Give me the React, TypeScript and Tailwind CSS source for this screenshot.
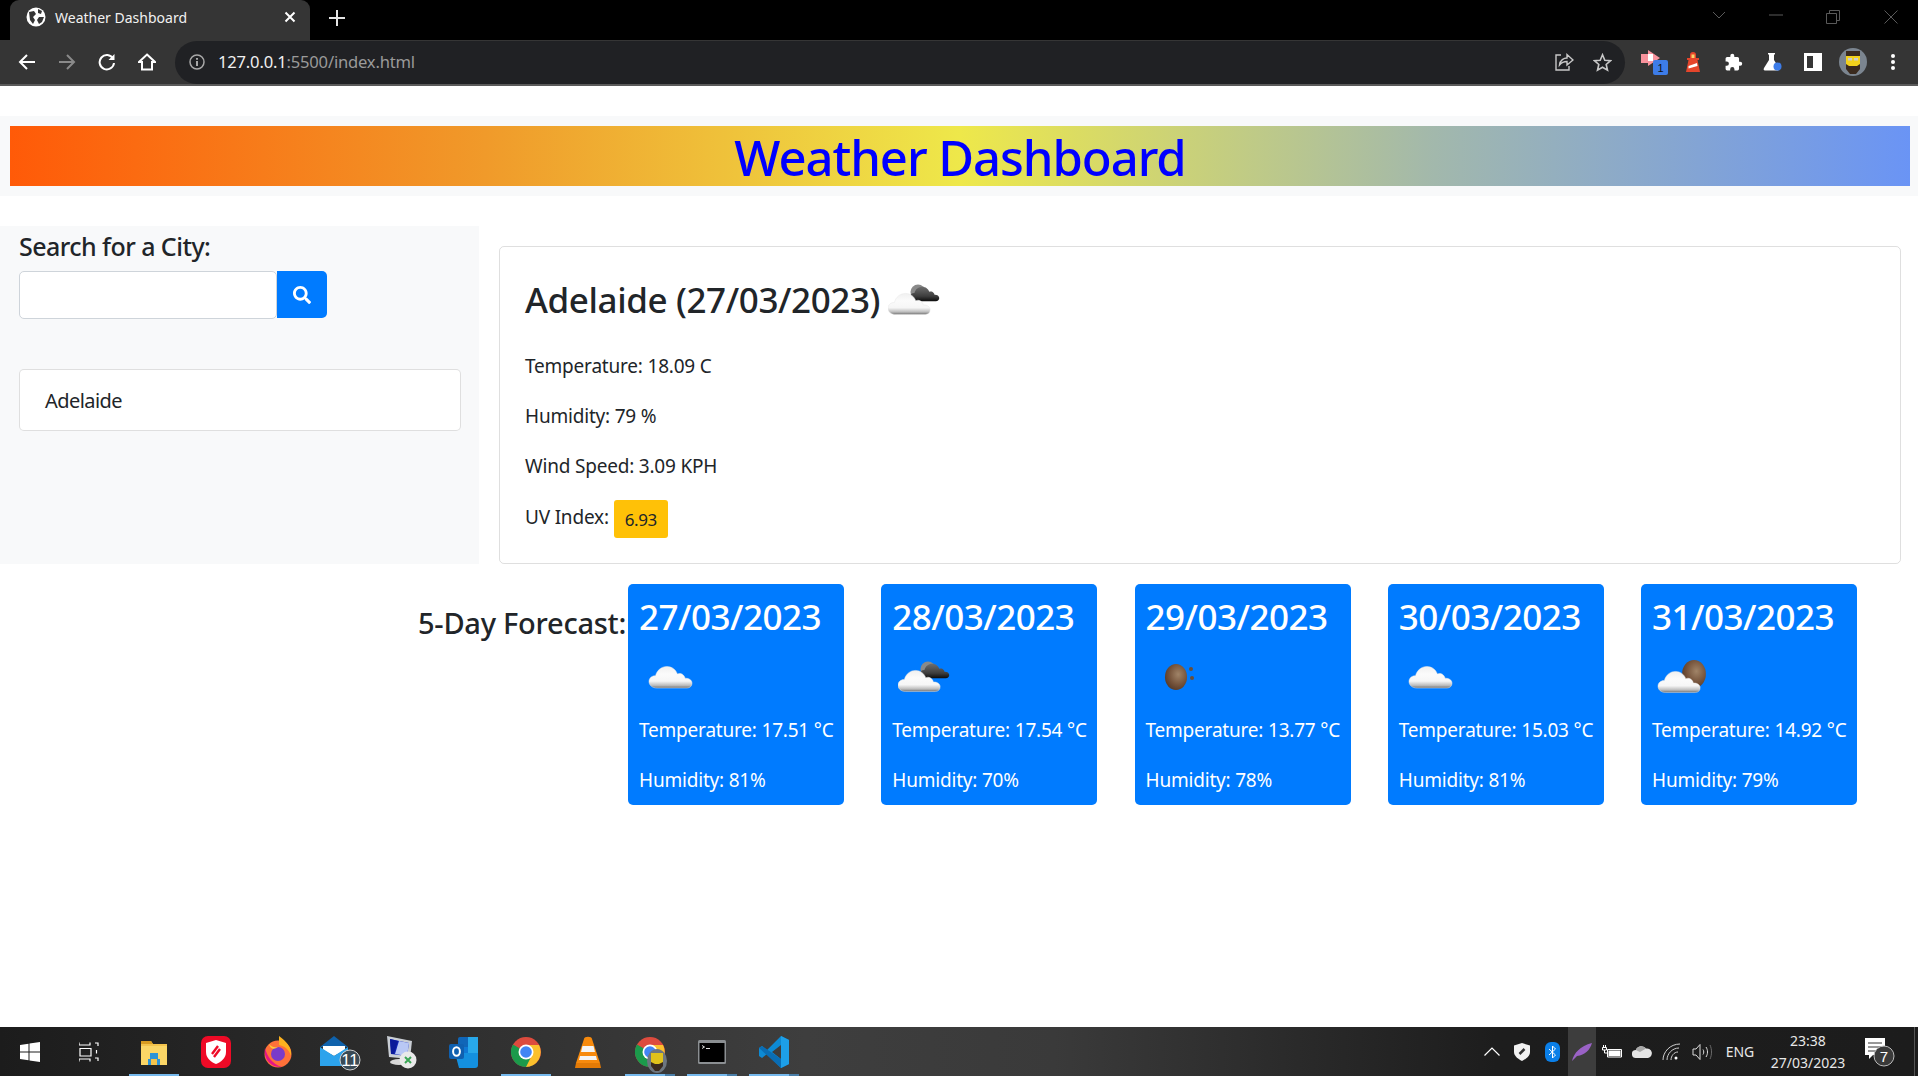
import React from "react";
import { FaSearch } from "react-icons/fa";

const W = ({ children, w, cls = "" }: { children?: React.ReactNode; w: string; cls?: string }) => (
  <div className={`${w} h-full flex items-center justify-center shrink-0 ${cls}`}>{children}</div>
);

function Cloud({ id, x = 0, y = 0, s = 1, dark = false }: { id: string; x?: number; y?: number; s?: number; dark?: boolean }) {
  return (
    <g transform={`translate(${x} ${y}) scale(${s})`}>
      <defs>
        <linearGradient id={id} x1="0" y1="0" x2="0" y2="1">
          {dark ? (
            <>
              <stop offset="0" stopColor="#6e6e6e" />
              <stop offset="0.65" stopColor="#3d3d3d" />
              <stop offset="1" stopColor="#0c0c0c" />
            </>
          ) : (
            <>
              <stop offset="0" stopColor="#f0f0f0" />
              <stop offset="0.35" stopColor="#fbfbfb" />
              <stop offset="0.68" stopColor="#f6f6f6" />
              <stop offset="0.88" stopColor="#bcbcbc" />
              <stop offset="1" stopColor="#707070" />
            </>
          )}
        </linearGradient>
      </defs>
      <path
        d="M8 24 C3 24 0 21 0 17.5 C0 14 3 11.6 6.5 11.8 C8 6 12.5 2.5 18 2.5 C23 2.5 27 5.8 28.3 10 C30 9 33 9.2 34.5 11.3 C35.5 12.5 36 13.5 36 14.3 C39.5 14 43 15.8 43 19.2 C43 22 41 24 38 24 Z"
        fill={`url(#${id})`}
        stroke={dark ? "none" : "#e6e6e6"}
        strokeWidth={dark ? 0 : 0.5}
      />
    </g>
  );
}

function Moon({ id, cx, cy, r = 10 }: { id: string; cx: number; cy: number; r?: number }) {
  return (
    <>
      <defs>
        <radialGradient id={id} cx="0.6" cy="0.4" r="0.75">
          <stop offset="0" stopColor="#a08468" />
          <stop offset="0.55" stopColor="#74523a" />
          <stop offset="1" stopColor="#4a3020" />
        </radialGradient>
      </defs>
      <ellipse cx={cx} cy={cy} rx={r * 0.85} ry={r} fill={`url(#${id})`} />
    </>
  );
}

function BrokenIcon({ id }: { id: string }) {
  return (
    <svg width="52" height="36" viewBox="0 0 52 36">
      <circle cx="30" cy="10" r="7.5" fill="#8a8a8a" />
      <Cloud id={`${id}d`} x={22} y={3} s={0.68} dark />
      <Cloud id={`${id}w`} x={0} y={9} s={0.98} />
    </svg>
  );
}
function CloudIcon({ id }: { id: string }) {
  return (
    <svg width="46" height="26" viewBox="0 0 46 26">
      <Cloud id={id} x={1} y={0} s={1} />
    </svg>
  );
}
function NightIcon({ id }: { id: string }) {
  return (
    <svg width="36" height="30" viewBox="0 0 36 30">
      <Moon id={id} cx={12} cy={15} r={13} />
      <circle cx="27" cy="7" r="2" fill="#6b4e38" />
      <circle cx="28" cy="16" r="2" fill="#6b4e38" />
    </svg>
  );
}
function CloudMoonIcon({ id }: { id: string }) {
  return (
    <svg width="50" height="36" viewBox="0 0 50 36">
      <Moon id={id} cx={37} cy={15} r={14} />
      <Cloud id={`${id}w`} x={1} y={10} s={0.98} />
    </svg>
  );
}

const forecast = [
  { d: "27/03/2023", t: "17.51", h: "81", icon: <CloudIcon id="f1" />, pl: "pl-[9px]" },
  { d: "28/03/2023", t: "17.54", h: "70", icon: <BrokenIcon id="f2" />, pl: "pl-[6px]" },
  { d: "29/03/2023", t: "13.77", h: "78", icon: <NightIcon id="f3" />, pl: "pl-[18px]" },
  { d: "30/03/2023", t: "15.03", h: "81", icon: <CloudIcon id="f4" />, pl: "pl-[9px]" },
  { d: "31/03/2023", t: "14.92", h: "79", icon: <CloudMoonIcon id="f5" />, pl: "pl-[5px]" },
];

const stroke = { fill: "none", stroke: "currentColor", strokeWidth: 2 } as const;

function Browser() {
  return (
    <>
      <div className="h-[40px] bg-black flex shrink-0 text-white">
        <div className="ml-[10px] w-[300px] h-full bg-[#353535] rounded-t-[9px] flex items-center pl-[16px] pr-[10px] pb-[6px]">
          <svg width="20" height="20" viewBox="0 0 20 20" className="shrink-0">
            <circle cx="10" cy="10" r="9.5" fill="#fff" />
            <path d="M3 5 L8 4 L10 7 L7 10 L9 13 L7 17 L4 13 Z M12 2 L16 4 L15 7 L12 6 Z M13 10 L18 10 L16 15 L13 17 L11 13 Z" fill="#353535" />
          </svg>
          <span className="ml-[9px] text-[14px] text-[#f1f1f1] flex-1 whitespace-nowrap">Weather Dashboard</span>
          <svg width="12" height="12" viewBox="0 0 12 12" className="text-white mr-[4px]"><path d="M1.5 1.5 L10.5 10.5 M10.5 1.5 L1.5 10.5" {...stroke} /></svg>
        </div>
        <svg width="16" height="16" viewBox="0 0 16 16" className="ml-[19px] mt-[10px] text-[#e4e4e4]"><path d="M8 0 V16 M0 8 H16" {...stroke} /></svg>
        <div className="ml-auto flex h-full items-start pt-[10px] text-[#5a5a5a]">
          <svg width="14" height="10" viewBox="0 0 14 10"><path d="M1 2 L7 8 L13 2" {...stroke} strokeWidth={1} /></svg>
          <svg width="14" height="10" viewBox="0 0 14 10" className="ml-[43px]"><path d="M0 5 H14" {...stroke} strokeWidth={1} /></svg>
          <svg width="14" height="14" viewBox="0 0 14 14" className="ml-[43px]"><path d="M.5 3.5 H10.5 V13.5 H.5 Z M3.5 3.5 V.5 H13.5 V10.5 H10.5" {...stroke} strokeWidth={1} /></svg>
          <svg width="14" height="14" viewBox="0 0 14 14" className="ml-[44px] mr-[20px]"><path d="M.5 .5 L13.5 13.5 M13.5 .5 L.5 13.5" {...stroke} strokeWidth={1} /></svg>
        </div>
      </div>
      <div className="h-[46px] bg-[#353535] border-b-2 border-[#5a5a5a] flex items-center pl-[7px] shrink-0 text-white">
        <W w="w-[40px]"><svg width="18" height="18" viewBox="0 0 18 18"><path d="M17 9 H2 M9 2 L2 9 L9 16" {...stroke} /></svg></W>
        <W w="w-[40px]" cls="text-[#8a8a8a]"><svg width="18" height="18" viewBox="0 0 18 18"><path d="M1 9 H16 M9 2 L16 9 L9 16" {...stroke} /></svg></W>
        <W w="w-[40px]"><svg width="18" height="18" viewBox="0 0 18 18"><path d="M15 5.5 A7.2 7.2 0 1 0 16 10" {...stroke} /><path d="M16.5 1 V7 H10.5 Z" fill="currentColor" /></svg></W>
        <W w="w-[40px]"><svg width="18" height="18" viewBox="0 0 18 18"><path d="M9 1.5 L17 9 H14 V16.5 H4 V9 H1 Z" {...stroke} /></svg></W>
        <div className="ml-[8px] w-[1450px] h-[43px] rounded-full bg-[#202124] flex items-center pl-[14px] shrink-0">
          <svg width="16" height="16" viewBox="0 0 16 16" className="text-[#a8a8a8]"><circle cx="8" cy="8" r="7" {...stroke} strokeWidth={1.5} /><path d="M8 4 V5.8 M8 7 V12" {...stroke} /></svg>
          <span className="ml-[13px] text-[16.6px] text-[#f0f0f0] tracking-[-0.2px]">127.0.0.1<span className="text-[#9a9a9a]">:5500/index.html</span></span>
          <div className="ml-auto flex items-center text-[#c8c8c8]">
            <W w="w-[39px] h-[20px]"><svg width="20" height="20" viewBox="0 0 20 20"><path d="M7 3 H2 V18 H15 V14" {...stroke} strokeWidth={1.4} /><path d="M5.5 13 C6 8 10 6 13 6 V2.5 L19 8 L13 13 V9.5 C10 9.5 7.5 10.5 5.5 13 Z" {...stroke} strokeWidth={1.4} /></svg></W>
            <W w="w-[39px] h-[20px]"><svg width="19" height="19" viewBox="0 0 19 19"><path d="M9.5 1.8 L11.8 7.2 L17.6 7.7 L13.2 11.5 L14.5 17.2 L9.5 14.2 L4.5 17.2 L5.8 11.5 L1.4 7.7 L7.2 7.2 Z" {...stroke} strokeWidth={1.6} /></svg></W>
            <span className="w-[3px]" />
          </div>
        </div>
        <div className="ml-[8px] flex h-full">
          <W w="w-[40px]">
            <svg width="30" height="28" viewBox="0 0 30 28" className="ml-[4px]">
              <path d="M1 6 H8 V2 L20 10 L8 18 V15 H1 Z" fill="#f8929c" />
              <path d="M8 6 H13 V13 H8 Z" fill="#fff" />
              <rect x="13" y="12" width="15" height="15" rx="2" fill="#3d7ce8" />
              <text x="20.5" y="24" fontSize="11" textAnchor="middle" fill="#111" fontFamily="Liberation Sans, sans-serif">1</text>
            </svg>
          </W>
          <W w="w-[40px]">
            <svg width="16" height="22" viewBox="0 0 16 22">
              <path d="M5 4 A3 3 0 0 1 11 4 V7 H14 V9 H12.5 L15 21 H1 L3.5 9 H2 V7 H5 Z" fill="#e5452b" />
              <rect x="6.5" y="3.5" width="3" height="3.5" fill="#f6d56b" />
              <path d="M3.5 15 L12 12 L12.5 15 L3.5 17.5 Z" fill="#fff" />
            </svg>
          </W>
          <W w="w-[40px]"><svg width="19" height="19" viewBox="0 0 24 24" fill="#fff"><path d="M20.5 11H19V7a2 2 0 0 0-2-2h-4V3.5a2.5 2.5 0 0 0-5 0V5H4a2 2 0 0 0-2 2v3.8h1.5a2.7 2.7 0 0 1 0 5.4H2V20a2 2 0 0 0 2 2h3.8v-1.5a2.7 2.7 0 0 1 5.4 0V22H17a2 2 0 0 0 2-2v-4h1.5a2.5 2.5 0 0 0 0-5z" /></svg></W>
          <W w="w-[40px]">
            <svg width="20" height="20" viewBox="0 0 20 20">
              <path d="M5 1 H12 V2.5 H11 V8 L16 16 C16.5 18 15.5 18.5 14 18.5 H3 C1 18.5 0 18 1 16 L6 8 V2.5 H5 Z" fill="#fff" />
              <circle cx="14.5" cy="14.5" r="4" fill="#3d7ce8" />
            </svg>
          </W>
          <W w="w-[40px]"><div className="w-[18px] h-[18px] border-[3px] border-white border-r-[9px]" /></W>
          <W w="w-[40px]">
            <svg width="28" height="28" viewBox="0 0 28 28">
              <circle cx="14" cy="14" r="14" fill="#7b8590" />
              <path d="M7 6 H21 V18 L18 24 H10 L7 18 Z" fill="#f3d11c" />
              <path d="M7 3 H21 V8 H7 Z M7 16 L10 18 H18 L21 16 V21 L17 26 H11 L7 21 Z" fill="#3a2a1e" />
              <rect x="9" y="10" width="4" height="2.5" fill="#ccc" />
              <rect x="15" y="10" width="4" height="2.5" fill="#ccc" />
            </svg>
          </W>
          <W w="w-[40px]">
            <svg width="6" height="18" viewBox="0 0 6 18" fill="#fff"><circle cx="3" cy="3" r="2" /><circle cx="3" cy="9" r="2" /><circle cx="3" cy="15" r="2" /></svg>
          </W>
        </div>
      </div>
    </>
  );
}

function TaskSlot({ children, active, extra }: { children: React.ReactNode; active?: boolean; extra?: boolean }) {
  return (
    <div className="w-[62px] h-full flex items-center justify-center shrink-0 relative">
      {children}
      {active && <div className={`absolute bottom-0 left-[6px] h-[2px] bg-[#76b9ed] ${extra ? "w-[40px]" : "w-[50px]"}`} />}
      {extra && <div className="absolute bottom-0 left-[46px] w-[10px] h-[2px] bg-[#4a7ea8]" />}
    </div>
  );
}

function ChromeLogo({ id }: { id: string }) {
  return (
    <svg width="30" height="30" viewBox="0 0 30 30" aria-label={id}>
      <circle cx="15" cy="15" r="15" fill="#dd4b3e" />
      <path d="M15 15 L2 7.5 A15 15 0 0 0 15 30 L22.5 28 Z" fill="#1b9a4b" />
      <path d="M15 8 H28 A15 15 0 0 1 15 30 L21 18 Z" fill="#fbc02d" />
      <circle cx="15" cy="15" r="7.5" fill="#fff" />
      <circle cx="15" cy="15" r="5.8" fill="#4285f4" />
    </svg>
  );
}

function Taskbar() {
  return (
    <div className="h-[49px] shrink-0 bg-[linear-gradient(90deg,#1c1c1c_0%,#3e3e3e_42%,#3a3a3a_55%,#1d1d1d_78%,#1c1c1c_100%)] flex text-white">
      <W w="w-[59px]"><svg width="20" height="20" viewBox="0 0 20 20" fill="#fff"><path d="M0 3 L8.5 1.8 V9.4 H0 Z M9.5 1.6 L20 0 V9.4 H9.5 Z M0 10.5 H8.5 V18.2 L0 17 Z M9.5 10.5 H20 V20 L9.5 18.4 Z" /></svg></W>
      <W w="w-[60px]"><svg width="20" height="20" viewBox="0 0 20 20" {...stroke} stroke="#fff" strokeWidth={1.2}><path d="M0 .5 V3 H11 V.5 M1 6.5 H12 V14 H1 Z M0 19.5 V17 H11 V19.5 M16 1 H19 V4 M17.5 8 V11.5 M16 16 H19 V19" /></svg></W>
      <span className="w-[4px]" />
      <TaskSlot active>
        <svg width="28" height="28" viewBox="0 0 28 28">
          <path d="M1 3 H11 L13 6 H27 V27 H1 Z" fill="#f3c34c" />
          <path d="M1 3 H11 L13 6 H1 Z" fill="#d99c21" />
          <rect x="1" y="8" width="26" height="19" fill="#fbd666" />
          <path d="M8 21 H10 V15 H18 V21 H20 V27 H8 Z" fill="#2c94d8" />
          <rect x="11" y="21" width="6" height="6" fill="#f3c34c" />
        </svg>
      </TaskSlot>
      <TaskSlot>
        <svg width="30" height="32" viewBox="0 0 30 32">
          <rect width="30" height="32" rx="7" fill="#ee0a26" />
          <path d="M15 4 L25 7 V16 C25 22 20 26 15 28 C10 26 5 22 5 16 V7 Z" fill="#fff" />
          <path d="M11 18 L17 10 M13 21 L19 13" stroke="#ee0a26" strokeWidth="2.4" fill="none" />
        </svg>
      </TaskSlot>
      <TaskSlot>
        <svg width="28" height="32" viewBox="0 0 28 32">
          <circle cx="14" cy="18" r="13.5" fill="#ff7139" />
          <path d="M15 0 C22 5 28 11 27 20 C25 13 20 10 15 9 Z" fill="#fcb21f" />
          <circle cx="14" cy="18" r="7" fill="#7a3bc9" />
          <path d="M1 12 C3 20 8 28 18 31 C8 32 -1 24 1 12 Z" fill="#e31587" />
          <path d="M5 8 C7 10 9 12 14 11 C10 14 6 13 5 8 Z" fill="#ffca3a" />
        </svg>
      </TaskSlot>
      <TaskSlot>
        <svg width="42" height="36" viewBox="0 0 42 36" className="mt-[2px]">
          <path d="M1 12 L15 1 L29 12 Z" fill="#0f62ac" />
          <path d="M4 11 H26 V15 L15 21 L4 15 Z" fill="#fff" />
          <path d="M1 12 L15 21 L29 12 V31 H1 Z" fill="#2ca3ec" />
          <circle cx="31" cy="25" r="10" fill="#3a4a55" stroke="#cfcfcf" strokeWidth="1" />
          <text x="31" y="31" fontSize="17" textAnchor="middle" fill="#fff" fontFamily="Liberation Sans, sans-serif">11</text>
        </svg>
      </TaskSlot>
      <TaskSlot>
        <svg width="32" height="34" viewBox="0 0 32 34">
          <path d="M1 1 L26 6 L24 24 L3 22 Z" fill="#c9ced4" />
          <path d="M4 4 L23 8 L21 21 L5 19 Z" fill="#1428b8" />
          <path d="M13 6 L23 8 L21 21 L9 19 Z" fill="#b9c8f5" />
          <path d="M4 4 L12 6 L8 19 L5 19 Z" fill="#0b1a9a" />
          <ellipse cx="13" cy="27" rx="9" ry="3" fill="#d8d8d8" />
          <circle cx="22" cy="25" r="8.5" fill="#e9e9e9" />
          <path d="M19 22 L25 28 M25 22 L19 28" stroke="#3aa655" strokeWidth="2" />
        </svg>
      </TaskSlot>
      <TaskSlot>
        <svg width="30" height="32" viewBox="0 0 30 32">
          <rect x="9" y="1" width="20" height="28" rx="2" fill="#1066b8" />
          <rect x="19" y="1" width="10" height="10" fill="#28a8ea" />
          <rect x="9" y="11" width="10" height="9" fill="#0f78d4" />
          <rect x="19" y="11" width="10" height="9" fill="#28a8ea" />
          <path d="M6 17 L29 17 V29 C29 31 28 32 26 32 H10 Z" fill="#1490df" />
          <rect x="0" y="8" width="15" height="15" rx="2" fill="#0f60b0" />
          <ellipse cx="7.5" cy="15.5" rx="3.4" ry="4.3" fill="none" stroke="#fff" strokeWidth="2" />
        </svg>
      </TaskSlot>
      <TaskSlot active><ChromeLogo id="c1" /></TaskSlot>
      <TaskSlot>
        <svg width="26" height="32" viewBox="0 0 26 32">
          <path d="M9 3 C9 0 17 0 17 3 L25 27 H1 Z" fill="#f78a0d" />
          <path d="M7.5 10 H18.5 L20 16 H6 Z M5 20 H21 L22 24 H4 Z" fill="#f4f4f4" />
          <path d="M1 27 H25 L26 32 H0 Z" fill="#e37a06" />
        </svg>
      </TaskSlot>
      <TaskSlot active extra>
        <div className="relative w-[30px] h-[30px]">
          <ChromeLogo id="c2" />
          <svg width="20" height="24" viewBox="0 0 20 24" className="absolute left-[12px] top-[12px]">
            <ellipse cx="10" cy="12" rx="10" ry="12" fill="#6d7680" />
            <path d="M4 4 H16 V14 L13 19 H7 L4 14 Z" fill="#e0c21b" />
            <path d="M4 13 L8 15 H12 L16 13 V17 L12 22 H8 L4 17 Z" fill="#3a2a1e" />
          </svg>
        </div>
      </TaskSlot>
      <TaskSlot active extra>
        <svg width="28" height="24" viewBox="0 0 28 24">
          <rect width="28" height="24" rx="1.5" fill="#8b8f92" />
          <rect x="1.5" y="3" width="25" height="19" fill="#000" />
          <path d="M4 5.5 L6.5 7 L4 8.5 M8 8.5 H12" stroke="#ddd" strokeWidth="1" fill="none" />
        </svg>
      </TaskSlot>
      <TaskSlot active extra>
        <svg width="30" height="32" viewBox="0 0 30 32">
          <path d="M22 0 L30 4 V28 L22 32 L8 18 L3 22 L0 20 V12 L3 10 L8 14 Z M22 9 L13 16 L22 23 Z" fill="#0d8ad4" />
          <path d="M22 0 L30 4 V28 L22 32 Z M22 9 V23 Z" fill="#1d9fe8" fillRule="evenodd" />
          <path d="M0 12 L3 10 L22 23 V32 Z" fill="#0a6db4" />
        </svg>
      </TaskSlot>
      <div className="ml-auto flex h-full items-center">
        <W w="w-[23px]"><svg width="16" height="9" viewBox="0 0 16 9"><path d="M.5 8.5 L8 1 L15.5 8.5" fill="none" stroke="#fff" strokeWidth="1.2" /></svg></W>
        <W w="w-[38px]"><svg width="16" height="18" viewBox="0 0 16 18"><path d="M8 0 L16 2.5 V9 C16 13 12 16 8 18 C4 16 0 13 0 9 V2.5 Z" fill="#f2f2f2" /><path d="M5.5 11 L10.5 6" stroke="#333" strokeWidth="2.5" /></svg></W>
        <W w="w-[22px]"><div className="w-[15px] h-[20px] rounded-[6px] bg-[#0a7fe8] flex items-center justify-center"><svg width="9" height="14" viewBox="0 0 9 14"><path d="M1 4 L7.5 10 L4.5 13 V1 L7.5 4 L1 10" fill="none" stroke="#fff" strokeWidth="1" /></svg></div></W>
        <span className="w-[5px]" />
        <W w="w-[28px]" cls="bg-[#3d3d3d]"><svg width="20" height="18" viewBox="0 0 20 18"><path d="M0 18 C2 10 8 3 20 0 C18 7 13 12 5 13 Z" fill="#9a62c6" /></svg></W>
        <W w="w-[32px]"><svg width="20" height="13" viewBox="0 0 20 13" fill="none" stroke="#fff" strokeWidth="1"><path d="M5.5 4.5 H19.5 V12 H5.5 Z M1.5 0 V2.5 M3.5 0 V2.5 M.5 2.5 H4.5 V5 H.5 Z M2.5 5 V8 H5.5" /><rect x="6.5" y="5.5" width="12" height="5.5" fill="#fff" stroke="none" /></svg></W>
        <W w="w-[28px]"><svg width="20" height="13" viewBox="0 0 20 13"><path d="M4 13 A4 4 0 0 1 3.8 5 A6 6 0 0 1 14 3.5 A4.5 4.5 0 0 1 16 13 Z" fill="#e4e4e4" /><path d="M3.8 5 A6 6 0 0 1 14 3.5 L8 7 Z" fill="#a8a8a8" /></svg></W>
        <W w="w-[32px]"><svg width="20" height="18" viewBox="0 0 20 18" fill="none" stroke="#cfcfcf" strokeWidth="1"><path d="M1 17 C1 9 8 1 18 1 M5 17 C5 11 10 5 17 5 M9 17 C9 13 12 9 16 9" /><circle cx="14" cy="15" r="1.5" fill="#fff" stroke="none" /></svg></W>
        <W w="w-[30px]"><svg width="22" height="18" viewBox="0 0 22 18" fill="none" stroke="#dcdcdc" strokeWidth="1"><path d="M1 6 H4 L8 1.5 V16.5 L4 12 H1 Z M11 6.5 C12 8 12 10 11 11.5 M14 4 C16 7 16 11 14 14" /><path d="M18 2 C20 6 20 12 18 16" stroke="#6a6a6a" /></svg></W>
        <div className="w-[44px] text-center text-[14px] text-[#e8e8e8]">ENG</div>
        <span className="w-[8px]" />
        <div className="w-[76px] flex flex-col items-center text-[14px] leading-[22px] text-[#e8e8e8] whitespace-nowrap">
          <span>23:38</span>
          <span>27/03/2023</span>
        </div>
        <W w="w-[68px]">
          <svg width="32" height="30" viewBox="0 0 32 30">
            <path d="M1 1 H21 V18 H9 L5 22 V18 H1 Z" fill="#fff" />
            <path d="M4 6 H18 M4 10 H18 M4 14 H18" stroke="#333" strokeWidth="1" />
            <circle cx="20" cy="19" r="10" fill="#3a3a3a" stroke="#bcbcbc" strokeWidth="1" />
            <text x="20" y="24.5" fontSize="15" textAnchor="middle" fill="#fff" fontFamily="Liberation Sans, sans-serif">7</text>
          </svg>
        </W>
        <div className="w-[1px] h-full bg-[#555]" />
        <div className="w-[3px]" />
      </div>
    </div>
  );
}

export default function App() {
  return (
    <div className="h-[1076px] w-[1918px] overflow-hidden flex flex-col bg-white font-['Noto_Sans','Open_Sans',sans-serif] text-[#212529]">
      <Browser />
      <div className="flex-1 flex flex-col pt-[30px]">
        <div className="h-[80px] bg-[#f8f9fa] py-[10px] pl-[10px] pr-[8px]">
          <div className="h-[60px] bg-[linear-gradient(90deg,#ff5a08_0%,#f09a2a_25%,#eee84a_50%,#a2b8ac_75%,#6a94f5_100%)] flex items-center justify-center">
            <h1 className="text-[49px] leading-[60px] font-medium text-[#0000ff] tracking-[-1.05px] pt-[2px]">Weather Dashboard</h1>
          </div>
        </div>
        <div className="flex mt-[30px] h-[338px]">
          <div className="w-[479px] bg-[#f8f9fa] pl-[19px] flex flex-col">
            <div className="text-[25px] leading-[37px] mt-[2px] font-medium tracking-[-0.55px]">Search for a City:</div>
            <div className="flex mt-[6px]">
              <div className="w-[258px] h-[48px] bg-white border border-[#ced4da] rounded-[5px]" />
              <div className="w-[50px] h-[47px] bg-[#007bff] rounded-r-[5px] flex items-center justify-center text-white"><FaSearch size={18} /></div>
            </div>
            <div className="mt-[50px] w-[442px] h-[62px] bg-white border border-[rgba(0,0,0,0.125)] rounded-[5px] pl-[25px] pt-[2px] flex items-center text-[20px] tracking-[-0.55px]">Adelaide</div>
          </div>
          <div className="ml-[20px] mt-[20px] w-[1402px] h-[318px] border border-[rgba(0,0,0,0.125)] rounded-[5px] pl-[25px] flex flex-col">
            <div className="flex items-center mt-[28px] h-[50px]">
              <h2 className="text-[35px] leading-[50px] font-medium tracking-[-0.4px]">Adelaide (27/03/2023)</h2>
              <span className="ml-[8px]"><BrokenIcon id="main" /></span>
            </div>
            <p className="mt-[26px] text-[19px] leading-[30px] tracking-[-0.2px]">Temperature: 18.09 C</p>
            <p className="mt-[20px] text-[19px] leading-[30px] tracking-[-0.2px]">Humidity: 79 %</p>
            <p className="mt-[20px] text-[19px] leading-[30px] tracking-[-0.2px]">Wind Speed: 3.09 KPH</p>
            <div className="mt-[19px] flex items-start text-[19px] tracking-[-0.2px]">
              <span className="mt-[3px]">UV Index:</span>
              <span className="ml-[5px] w-[54px] h-[38px] pt-[2px] bg-[#ffc107] rounded-[3px] flex items-center justify-center text-[17px] tracking-[-0.4px]">6.93</span>
            </div>
          </div>
        </div>
        <div className="flex mt-[20px] pl-[418px]">
          <div className="w-[210px] text-[29px] leading-[44px] mt-[17px] font-medium whitespace-nowrap tracking-[-0.25px]">5-Day Forecast:</div>
          <div className="flex gap-[37.25px]">
            {forecast.map((f) => (
              <div key={f.d} className="w-[216px] h-[221px] bg-[#007bff] rounded-[5px] text-white pl-[11px] flex flex-col">
                <div className="text-[35px] leading-[45px] mt-[10px] font-medium tracking-[-0.5px] whitespace-nowrap">{f.d}</div>
                <div className={`h-[46px] mt-[15px] flex items-center ${f.pl}`}>{f.icon}</div>
                <p className="mt-[15px] text-[19px] leading-[30px] tracking-[-0.2px] whitespace-nowrap">Temperature: {f.t} °C</p>
                <p className="mt-[20px] text-[19px] leading-[30px] tracking-[-0.2px] whitespace-nowrap">Humidity: {f.h}%</p>
              </div>
            ))}
          </div>
        </div>
      </div>
      <Taskbar />
    </div>
  );
}
